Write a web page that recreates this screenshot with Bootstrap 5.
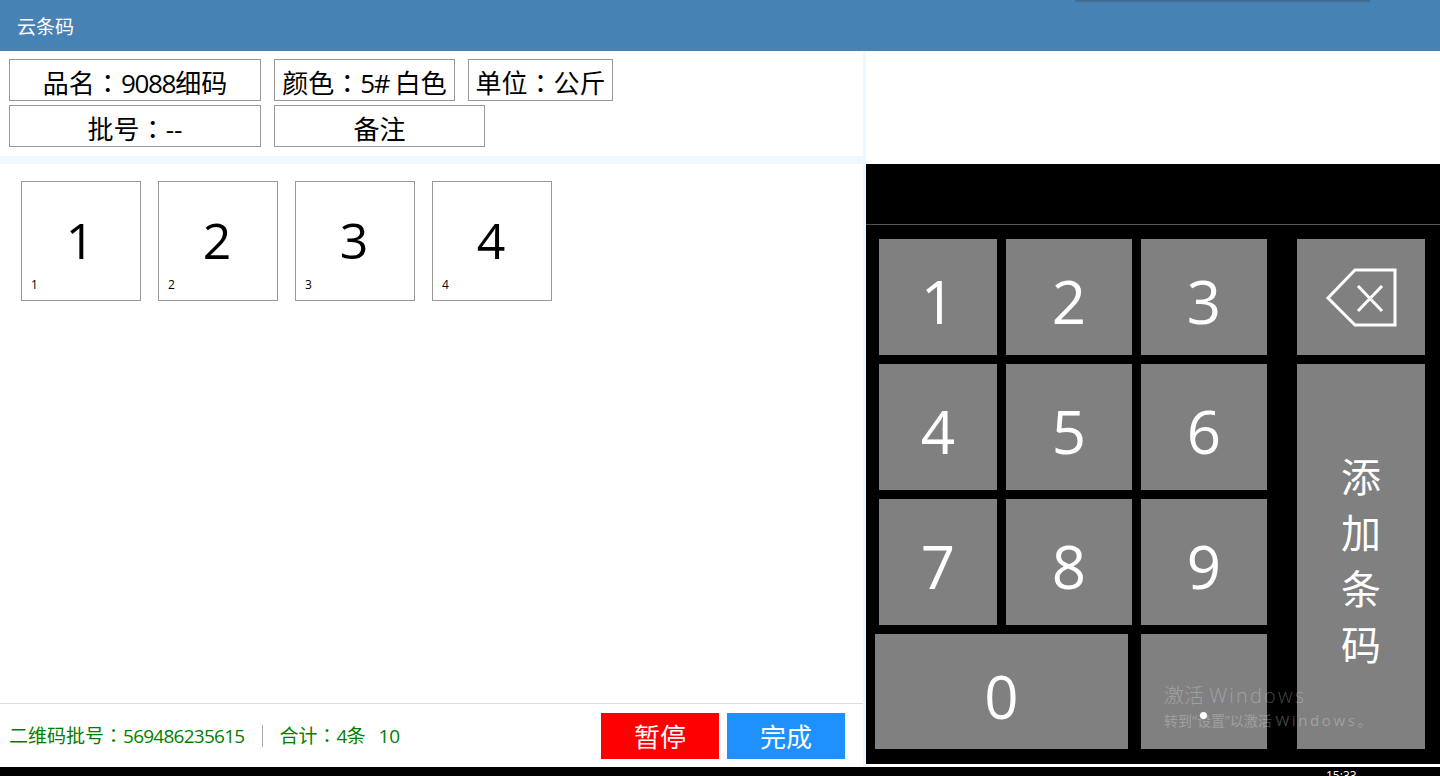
<!DOCTYPE html>
<html lang="zh-CN">
<head>
    <meta charset="UTF-8">
    <meta name="viewport" content="width=device-width, initial-scale=1.0">
    <title>云条码</title>
    <link href="https://cdn.jsdelivr.net/npm/bootstrap@5.3.0/dist/css/bootstrap.min.css" rel="stylesheet">
    <style>
        html, body { height: 776px; overflow: hidden; }
        body { font-family: "Open Sans", "Noto Sans CJK SC", sans-serif; background: #000; color: #000; }
        .app-header { height: 51px; background: #4682b4; color: #fff; font-size: 19px; padding: 3px 0 0 17px; position: relative; }
        .header-shadow { position: absolute; left: 1075px; top: 0; width: 295px; height: 3px; background: linear-gradient(#3f6585, #4682b4); }
        .app-main { height: 716px; }
        .left-pane { width: 866px; background: #fff; border-right: 3px solid #f0f8ff; }
        .info-area { height: 105px; padding: 8px 0 0 9px; }
        .info-line { gap: 13px; margin-bottom: 4px; }
        .info-box { height: 42px; border: 1px solid #999; font-size: 26px; line-height: 1; padding-top: 5px; }
        .w-name { width: 252px; } .w-color { width: 181px; } .w-unit { width: 145px; } .w-note { width: 211px; }
        .colon-mark { font-family: "Noto Sans CJK TC", sans-serif; }
        .latin-tight { letter-spacing: -1.3px; }
        .band { height: 8px; background: #f0f8ff; }
        .tiles { padding: 17px 0 0 21px; gap: 17px; height: 539px; }
        .tile { width: 120px; height: 120px; border: 1px solid #999; position: relative; font-size: 50px; padding: 0 2px 2px 0; }
        .tile-sub { position: absolute; left: 9px; bottom: 9px; font-size: 12px; line-height: 1; }
        .foot-bar { height: 64px; border-top: 1px solid #ddd; padding: 0 18px 0 9px; color: #008000; font-size: 19px; }
        .foot-num { letter-spacing: -.75px; }
        .foot-total { margin-left: 3px; }
        .foot-sep { width: 1px; height: 22px; background: #a9a9a9; margin: 0 16px 0 18px; }
        .foot-btn { width: 118px; height: 46px; border: 0; border-radius: 0; color: #fff; font-size: 26px; padding: 2px 0 0; line-height: 1; }
        .foot-btn:hover { color: #fff; }
        .btn-pause, .btn-pause:hover { background: #f00; }
        .btn-done, .btn-done:hover { background: #1e90ff; }
        .pad-pane { flex: 1; position: relative; border-bottom: 3px solid #fff; }
        .top-white { height: 113px; background: #fff; }
        .pad-display { height: 61px; border-bottom: 1px solid #555; }
        .pad-grid { display: grid; grid-template-columns: 118px 126px 126px 149px; grid-template-rows: 116px 126px 126px 115px; gap: 9px; padding: 14px 0 0 13px; }
        .pad-key { background: #808080; color: #fff; font-size: 60px; line-height: 1; padding-top: 8px; }
        .key-back { padding-top: 0; margin-left: 21px; }
        .key-add { grid-column: 4; grid-row: 2 / 5; margin-left: 21px; font-size: 40px; padding-top: 8px; }
        .key-add span { width: 1em; line-height: 56px; }
        .key-zero { grid-column: span 2; margin: 0 4px 0 -4px; }
        .activate-mark { position: absolute; left: 298px; top: 635px; color: rgba(255,255,255,.27); line-height: 1; white-space: nowrap; pointer-events: none; }
        .activate-title { font-size: 20px; margin-bottom: 7px; font-weight: 300; }
        .activate-title span { letter-spacing: 2.2px; }
        .activate-sub { font-size: 14px; }
        .activate-sub span { font-size: 15px; letter-spacing: 2.6px; }
        .cursor-dot { position: absolute; left: 334px; top: 661px; width: 7px; height: 7px; border-radius: 50%; background: #fff; }
        .task-clock { position: absolute; left: 1326px; top: 770px; color: #fff; font-size: 12px; line-height: 1; }
    </style>
</head>
<body>
    <div class="app-header d-flex align-items-center">
        <span>云条码</span>
        <div class="header-shadow"></div>
    </div>
    <div class="app-main d-flex">
        <div class="left-pane d-flex flex-column flex-shrink-0">
            <div class="info-area">
                <div class="info-line d-flex">
                    <div class="info-box w-name d-flex align-items-center justify-content-center"><span>品名<span class="colon-mark" lang="zh-TW">：</span><span class="latin-tight">9088</span>细码</span></div>
                    <div class="info-box w-color d-flex align-items-center justify-content-center"><span>颜色<span class="colon-mark" lang="zh-TW">：</span><span class="latin-tight">5# </span>白色</span></div>
                    <div class="info-box w-unit d-flex align-items-center justify-content-center"><span>单位<span class="colon-mark" lang="zh-TW">：</span>公斤</span></div>
                </div>
                <div class="info-line d-flex">
                    <div class="info-box w-name d-flex align-items-center justify-content-center"><span>批号<span class="colon-mark" lang="zh-TW">：</span>--</span></div>
                    <div class="info-box w-note d-flex align-items-center justify-content-center">备注</div>
                </div>
            </div>
            <div class="band"></div>
            <div class="tiles d-flex align-items-start">
                <div class="tile d-flex align-items-center justify-content-center">1<span class="tile-sub">1</span></div>
                <div class="tile d-flex align-items-center justify-content-center">2<span class="tile-sub">2</span></div>
                <div class="tile d-flex align-items-center justify-content-center">3<span class="tile-sub">3</span></div>
                <div class="tile d-flex align-items-center justify-content-center">4<span class="tile-sub">4</span></div>
            </div>
            <div class="foot-bar d-flex align-items-center">
                <span>二维码批号<span class="colon-mark" lang="zh-TW">：</span><span class="foot-num">569486235615</span></span>
                <span class="foot-sep"></span>
                <span>合计<span class="colon-mark" lang="zh-TW">：</span><span class="foot-num">4</span>条&nbsp;&nbsp;<span class="foot-total">10</span></span>
                <div class="ms-auto d-flex gap-2">
                    <button class="btn foot-btn btn-pause">暂停</button>
                    <button class="btn foot-btn btn-done">完成</button>
                </div>
            </div>
        </div>
        <div class="pad-pane">
            <div class="top-white"></div>
            <div class="pad-display"></div>
            <div class="pad-grid">
                <div class="pad-key d-flex align-items-center justify-content-center">1</div>
                <div class="pad-key d-flex align-items-center justify-content-center">2</div>
                <div class="pad-key d-flex align-items-center justify-content-center">3</div>
                <div class="pad-key key-back d-flex align-items-center justify-content-center">
                    <svg width="73" height="61" viewBox="0 0 73 61" fill="none" stroke="#fff" stroke-width="3">
                        <path d="M3 31 30 3H70V58H30Z"/>
                        <path d="M33 19 57 44M57 19 33 44"/>
                    </svg>
                </div>
                <div class="pad-key d-flex align-items-center justify-content-center">4</div>
                <div class="pad-key d-flex align-items-center justify-content-center">5</div>
                <div class="pad-key d-flex align-items-center justify-content-center">6</div>
                <div class="pad-key key-add d-flex align-items-center justify-content-center"><span>添加条码</span></div>
                <div class="pad-key d-flex align-items-center justify-content-center">7</div>
                <div class="pad-key d-flex align-items-center justify-content-center">8</div>
                <div class="pad-key d-flex align-items-center justify-content-center">9</div>
                <div class="pad-key key-zero d-flex align-items-center justify-content-center">0</div>
                <div class="pad-key"></div>
            </div>
            <div class="activate-mark">
                <div class="activate-title">激活 <span>Windows</span></div>
                <div class="activate-sub">转到“设置”以激活 <span>Windows</span>。</div>
            </div>
            <div class="cursor-dot"></div>
        </div>
    </div>
    <div class="task-clock">15:33</div>
    <script src="https://cdn.jsdelivr.net/npm/bootstrap@5.3.0/dist/js/bootstrap.bundle.min.js"></script>
</body>
</html>
